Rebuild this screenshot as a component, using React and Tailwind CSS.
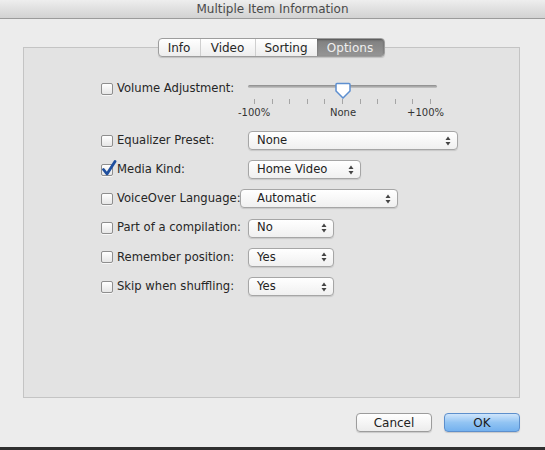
import React from "react";

const font = { fontFamily: '"DejaVu Sans", "Liberation Sans", sans-serif' };

function Checkbox({ checked }) {
  return (
    <div className="relative w-[12px] h-[12px] shrink-0 rounded-[2px] border border-[#8e8e8e] bg-gradient-to-b from-[#ffffff] to-[#e6e6e6] shadow-[0_1px_0_rgba(255,255,255,0.7)]">
      {checked && (
        <svg className="absolute -top-[5px] -left-[1px]" width="16" height="17" viewBox="0 0 16 17">
          <path d="M2.5 9.5 L6 14 L14 1.5" fill="none" stroke="#1f4f9e" strokeWidth="2.8" strokeLinecap="round" strokeLinejoin="round" />
        </svg>
      )}
    </div>
  );
}

function Arrows() {
  return (
    <svg width="6" height="10" viewBox="0 0 6 10" className="shrink-0">
      <path d="M3 0.5 L5.5 4 L0.5 4 Z" fill="#444" />
      <path d="M3 9.5 L5.5 6 L0.5 6 Z" fill="#444" />
    </svg>
  );
}

function Select({ value, w, extra = "" }) {
  return (
    <div
      className={`h-[19px] flex items-center justify-between pl-[8px] pr-[6px] rounded-[4px] border border-[#a6a6a6] bg-gradient-to-b from-[#ffffff] to-[#f0f0f0] shadow-[0_1px_1px_rgba(0,0,0,0.12)] text-[11.6px] text-[#222] ${w} ${extra}`}
    >
      <span>{value}</span>
      <Arrows />
    </div>
  );
}

function Row({ label, checked, children }) {
  return (
    <div className="h-[29.2px] flex items-center">
      <div className="w-[147px] flex items-center gap-[4px]">
        <Checkbox checked={checked} />
        <span className="text-[11.6px] text-[#262626] whitespace-nowrap">{label}</span>
      </div>
      {children}
    </div>
  );
}

export default function App() {
  const ticks = Array.from({ length: 11 });
  return (
    <div className="w-[545px] h-[450px] bg-[#ececec] flex flex-col overflow-hidden" style={font}>
      <div className="h-[19px] shrink-0 flex items-center justify-center border-b border-[#9b9b9b] bg-gradient-to-b from-[#eeeeee] to-[#d2d2d2] text-[12px] text-[#4a4a4a]">
        Multiple Item Information
      </div>

      <div className="pl-[23px] pr-[25px] pt-[19px]">
        <div className="relative z-10 flex justify-center pr-[1px]">
          <div className="flex h-[19px] rounded-[4px] border border-[#9d9d9d] bg-gradient-to-b from-[#ffffff] to-[#ededed] shadow-[0_1px_1px_rgba(0,0,0,0.15)] text-[12px] text-[#262626] overflow-hidden">
            <div className="w-[42px] flex items-center justify-center border-r border-[#cfcfcf]">Info</div>
            <div className="w-[55px] flex items-center justify-center border-r border-[#cfcfcf]">Video</div>
            <div className="w-[61px] flex items-center justify-center">Sorting</div>
            <div className="w-[67px] flex items-center justify-center bg-gradient-to-b from-[#7f7f7f] to-[#959595] text-[#efefef] shadow-[inset_0_1px_2px_rgba(0,0,0,0.35)]">Options</div>
          </div>
        </div>

        <div className="-mt-[10px] h-[351px] border border-[#c4c4c4] bg-[#e3e3e3] pl-[77px] pt-[33px]">
          {/* Volume row */}
          <div className="h-[45px] flex items-start">
            <div className="w-[147px] h-[16px] flex items-center gap-[4px]">
              <Checkbox />
              <span className="text-[11.6px] text-[#262626] whitespace-nowrap">Volume Adjustment:</span>
            </div>
            <div className="w-[189px] flex flex-col -mt-[1px]">
              <div className="relative h-[19px]">
                <div className="absolute left-0 right-0 top-[5px] h-[3px] rounded-full bg-gradient-to-b from-[#8a8a8a] to-[#c9c9c9]" />
                <svg className="absolute left-[87px] top-[2px]" width="16" height="17" viewBox="0 0 16 17">
                  <path d="M2 1.5 H14 Q15 1.5 15 2.5 V9 L8 16 L1 9 V2.5 Q1 1.5 2 1.5 Z" fill="#ffffff" stroke="#5d8fd0" strokeWidth="1.5" />
                </svg>
              </div>
              <div className="flex justify-between px-[6px] h-[6px]">
                {ticks.map((_, i) => (
                  <div key={i} className="w-[1px] h-[5px] bg-[#a5a5a5]" />
                ))}
              </div>
              <div className="relative h-[12px] text-[10px] text-[#333]">
                <span className="absolute -left-[10px] top-0">-100%</span>
                <span className="absolute left-[82px] top-0">None</span>
                <span className="absolute -right-[7px] top-0">+100%</span>
              </div>
            </div>
          </div>

          <Row label="Equalizer Preset:">
            <Select value="None" w="w-[210px]" />
          </Row>
          <Row label="Media Kind:" checked>
            <Select value="Home Video" w="w-[113px]" />
          </Row>
          <Row label="VoiceOver Language:">
            <Select value="Automatic" w="w-[158px]" extra="-ml-[8px] pl-[16px]" />
          </Row>
          <Row label="Part of a compilation:">
            <Select value="No" w="w-[86px]" />
          </Row>
          <Row label="Remember position:">
            <Select value="Yes" w="w-[86px]" />
          </Row>
          <Row label="Skip when shuffling:">
            <Select value="Yes" w="w-[86px]" />
          </Row>
        </div>

        <div className="mt-[15px] flex justify-end gap-[12px]">
          <div className="w-[76px] h-[19px] flex items-center justify-center rounded-[4px] border border-[#9c9c9c] bg-gradient-to-b from-[#ffffff] to-[#ececec] shadow-[0_1px_1px_rgba(0,0,0,0.15)] text-[12px] text-[#222]">
            Cancel
          </div>
          <div className="w-[76px] h-[19px] flex items-center justify-center rounded-[4px] border border-[#5d8fcc] bg-gradient-to-b from-[#cfe5fb] via-[#92c4f3] to-[#74b1ee] shadow-[0_1px_1px_rgba(0,0,0,0.15)] text-[12px] text-[#1b1b1b]">
            OK
          </div>
        </div>
      </div>

      <div className="mt-auto h-[3px] bg-[#2f2f2f]" />
    </div>
  );
}
